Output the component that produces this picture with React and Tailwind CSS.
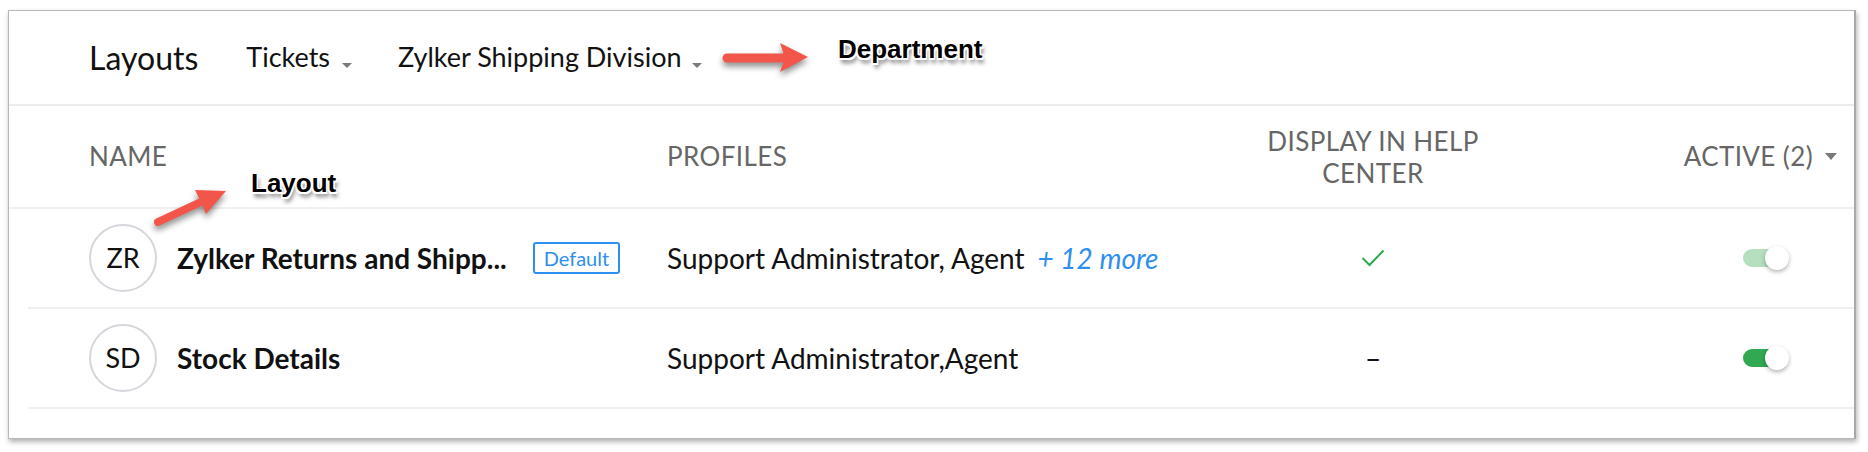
import React from 'react';

function Caret({ size = 5 }) {
  return (
    <span
      className={`inline-block w-0 h-0 border-l-transparent border-r-transparent border-t-[#7a7a7a] ${
        size === 6 ? 'border-l-[6px] border-r-[6px] border-t-[7px]' : 'border-l-[5px] border-r-[5px] border-t-[5px]'
      }`}
    />
  );
}

function Toggle({ light }) {
  return (
    <div className="relative w-[46px] h-[24px]">
      <div className={`absolute left-0 top-[3px] w-[40px] h-[18px] rounded-full ${light ? 'bg-[#b5dfbf]' : 'bg-[#31a852]'}`} />
      <div className="absolute right-0 top-0 w-6 h-6 rounded-full bg-white shadow-[0_2px_4px_rgba(0,0,0,0.3)]" />
    </div>
  );
}

function Avatar({ text }) {
  return (
    <div className="w-[68px] h-[68px] rounded-full border-2 border-[#d6d6dc] flex items-center justify-center text-[27px] text-[#111] shrink-0">
      {text}
    </div>
  );
}

const rows = [
  {
    initials: 'ZR',
    name: 'Zylker Returns and Shipp...',
    isDefault: true,
    profiles: 'Support Administrator, Agent',
    more: '+ 12 more',
    helpCenter: true,
    light: true,
  },
  {
    initials: 'SD',
    name: 'Stock Details',
    isDefault: false,
    profiles: 'Support Administrator,Agent',
    more: null,
    helpCenter: false,
    light: false,
  },
];

const annotate =
  "absolute font-['Liberation_Sans',Arial,sans-serif] font-bold text-black leading-none [text-shadow:-1.5px_-1.5px_0_#fff,1.5px_-1.5px_0_#fff,-1.5px_1.5px_0_#fff,1.5px_1.5px_0_#fff,0_2px_0_#fff,2px_5px_4px_rgba(0,0,0,0.55)]";

export default function App() {
  return (
    <div className="relative w-[1868px] h-[452px] bg-white pt-[10px] pl-[8px] font-['Lato','Open_Sans',sans-serif]">
      <div className="w-[1848px] h-[429px] bg-white border border-[#b8b8b8] border-r-2 border-r-[#a9a9a9] shadow-[1px_3px_5px_rgba(0,0,0,0.3)]">
        {/* top bar */}
        <div className="h-[95px] flex items-center pl-[80px] border-b-2 border-[#ececec] text-[#111]">
          <span className="text-[32px]">Layouts</span>
          <span className="ml-[48px] text-[27px]">Tickets</span>
          <span className="ml-[12px] mt-[9px]"><Caret /></span>
          <span className="ml-[46px] text-[27px]">Zylker Shipping Division</span>
          <span className="ml-[10px] mt-[9px]"><Caret /></span>
        </div>

        {/* column headers */}
        <div className="h-[103px] grid grid-cols-[578px_586px_240px_1fr] items-center pl-[80px] border-b-2 border-[#f0f0f0] text-[26px] text-[#666] tracking-[0.4px]">
          <div>NAME</div>
          <div>PROFILES</div>
          <div className="text-center leading-[32px]">DISPLAY IN HELP<br />CENTER</div>
          <div className="flex items-center justify-end pr-[17px] gap-[12px]">
            <span>ACTIVE (2)</span>
            <Caret size={6} />
          </div>
        </div>

        {/* rows */}
        {rows.map(row => (
          <div
            key={row.initials}
            className="h-[100px] ml-[19px] pl-[61px] grid grid-cols-[578px_586px_240px_1fr] items-center border-b-2 border-[#f0f0f0] text-[28px] text-[#111]"
          >
            <div className="flex items-center">
              <Avatar text={row.initials} />
              <span className="ml-[20px] font-bold">{row.name}</span>
              {row.isDefault && (
                <span className="ml-[26px] px-[9px] h-[32px] flex items-center border-2 border-[#2e8ff0] rounded-[3px] text-[20px] text-[#2e8ff0]">
                  Default
                </span>
              )}
            </div>
            <div className="flex items-center">
              <span>{row.profiles}</span>
              {row.more && <span className="ml-[13px] italic text-[#2e8ff0]">{row.more}</span>}
            </div>
            <div className="flex justify-center">
              {row.helpCenter ? (
                <svg width="24" height="18" viewBox="0 0 24 18" fill="none">
                  <polyline points="1.5,9 8.5,16 22.5,1.5" stroke="#2fa84f" strokeWidth="2" />
                </svg>
              ) : (
                <span>–</span>
              )}
            </div>
            <div className="flex justify-end pr-[65px]">
              <Toggle light={row.light} />
            </div>
          </div>
        ))}
      </div>

      {/* annotation: Department */}
      <svg className="absolute left-[715px] top-[35px] w-[110px] h-[50px] drop-shadow-[0_4px_3px_rgba(0,0,0,0.45)]" viewBox="0 0 110 50">
        <line x1="12" y1="23" x2="70" y2="23" stroke="#f2564a" strokeWidth="9" strokeLinecap="round" />
        <polygon points="93,22 65,8 70,23 65,37" fill="#f2564a" />
      </svg>
      <span className={`${annotate} left-[838px] top-[36px] text-[26px]`}>Department</span>

      {/* annotation: Layout */}
      <svg className="absolute left-[145px] top-[180px] w-[95px] h-[55px] drop-shadow-[0_4px_3px_rgba(0,0,0,0.45)]" viewBox="0 0 95 55">
        <line x1="13" y1="42" x2="58" y2="21" stroke="#f2564a" strokeWidth="8" strokeLinecap="round" />
        <polygon points="81,11 50,10 56,22 61,34" fill="#f2564a" />
      </svg>
      <span className={`${annotate} left-[251px] top-[170px] text-[26px]`}>Layout</span>
    </div>
  );
}
